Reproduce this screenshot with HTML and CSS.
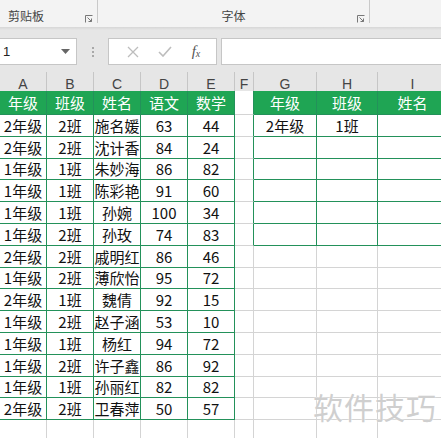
FILE: index.html
```html
<!DOCTYPE html>
<html lang="zh">
<head>
<meta charset="utf-8">
<link rel="stylesheet" href="styles.css">
</head>
<body>
<div class="page">
  <div class="ribbon">
    <div class="group g1"><span class="glabel">剪贴板</span><svg class="launch" width="8" height="8" viewBox="0 0 8 8"><path d="M0.5 7.5V0.5H7.5" fill="none" stroke="#777" stroke-width="1"/><path d="M2.5 2.5L6.5 6.5M3.5 6.5H6.5V3.5" fill="none" stroke="#777" stroke-width="1"/></svg></div>
    <div class="group g2"><span class="glabel center">字体</span><svg class="launch" width="8" height="8" viewBox="0 0 8 8"><path d="M0.5 7.5V0.5H7.5" fill="none" stroke="#777" stroke-width="1"/><path d="M2.5 2.5L6.5 6.5M3.5 6.5H6.5V3.5" fill="none" stroke="#777" stroke-width="1"/></svg></div>
  </div>
  <div class="shadow"></div>
  <div class="fbar">
    <div class="namebox"><span class="nbtext">1</span><svg class="drop" width="9" height="5" viewBox="0 0 9 5"><path d="M0 0H9L4.5 5Z" fill="#666"/></svg></div>
    <div class="dots"><i></i><i></i><i></i></div>
    <div class="fxbox">
      <svg class="ico" width="12" height="12" viewBox="0 0 12 12"><path d="M1 1L11 11M11 1L1 11" stroke="#bdbdbd" stroke-width="1.3" fill="none"/></svg>
      <svg class="ico" width="14" height="11" viewBox="0 0 14 11"><path d="M1 6L5 10L13 1" stroke="#bdbdbd" stroke-width="1.6" fill="none"/></svg>
      <span class="fx">f<sub>x</sub></span>
    </div>
    <div class="finput"></div>
  </div>
  <div class="sheet">
    <div class="ch">A</div><div class="ch">B</div><div class="ch">C</div><div class="ch">D</div><div class="ch">E</div><div class="ch">F</div><div class="ch">G</div><div class="ch">H</div><div class="ch">I</div>

    <div class="c h">年级</div><div class="c h">班级</div><div class="c h">姓名</div><div class="c h">语文</div><div class="c h">数学</div><div class="c f fg"></div><div class="c h">年级</div><div class="c h">班级</div><div class="c h">姓名</div>

    <div class="c g">2年级</div><div class="c g">2班</div><div class="c g">施名媛</div><div class="c g">63</div><div class="c g">44</div><div class="c f fg"></div><div class="c g">2年级</div><div class="c g">1班</div><div class="c g"></div>
    <div class="c g">2年级</div><div class="c g">2班</div><div class="c g">沈计香</div><div class="c g">84</div><div class="c g">24</div><div class="c f fg"></div><div class="c g"></div><div class="c g"></div><div class="c g"></div>
    <div class="c g">1年级</div><div class="c g">1班</div><div class="c g">朱妙海</div><div class="c g">86</div><div class="c g">82</div><div class="c f fg"></div><div class="c g"></div><div class="c g"></div><div class="c g"></div>
    <div class="c g">1年级</div><div class="c g">1班</div><div class="c g">陈彩艳</div><div class="c g">91</div><div class="c g">60</div><div class="c f fg"></div><div class="c g"></div><div class="c g"></div><div class="c g"></div>
    <div class="c g">1年级</div><div class="c g">1班</div><div class="c g">孙婉</div><div class="c g">100</div><div class="c g">34</div><div class="c f fg"></div><div class="c g"></div><div class="c g"></div><div class="c g"></div>
    <div class="c g">1年级</div><div class="c g">2班</div><div class="c g">孙玫</div><div class="c g">74</div><div class="c g">83</div><div class="c f fg"></div><div class="c g"></div><div class="c g"></div><div class="c g"></div>
    <div class="c g">2年级</div><div class="c g">2班</div><div class="c g">戚明红</div><div class="c g">86</div><div class="c g">46</div><div class="c f"></div><div class="c"></div><div class="c"></div><div class="c"></div>
    <div class="c g">1年级</div><div class="c g">2班</div><div class="c g">薄欣怡</div><div class="c g">95</div><div class="c g">72</div><div class="c f"></div><div class="c"></div><div class="c"></div><div class="c"></div>
    <div class="c g">2年级</div><div class="c g">1班</div><div class="c g">魏倩</div><div class="c g">92</div><div class="c g">15</div><div class="c f"></div><div class="c"></div><div class="c"></div><div class="c"></div>
    <div class="c g">1年级</div><div class="c g">2班</div><div class="c g">赵子涵</div><div class="c g">53</div><div class="c g">10</div><div class="c f"></div><div class="c"></div><div class="c"></div><div class="c"></div>
    <div class="c g">1年级</div><div class="c g">1班</div><div class="c g">杨红</div><div class="c g">94</div><div class="c g">72</div><div class="c f"></div><div class="c"></div><div class="c"></div><div class="c"></div>
    <div class="c g">1年级</div><div class="c g">2班</div><div class="c g">许子鑫</div><div class="c g">86</div><div class="c g">92</div><div class="c f"></div><div class="c"></div><div class="c"></div><div class="c"></div>
    <div class="c g">1年级</div><div class="c g">1班</div><div class="c g">孙丽红</div><div class="c g">82</div><div class="c g">82</div><div class="c f"></div><div class="c"></div><div class="c"></div><div class="c"></div>
    <div class="c g">2年级</div><div class="c g">2班</div><div class="c g">卫春萍</div><div class="c g">50</div><div class="c g">57</div><div class="c f"></div><div class="c"></div><div class="c"></div><div class="c"></div>
    <div class="c"></div><div class="c"></div><div class="c"></div><div class="c"></div><div class="c"></div><div class="c f"></div><div class="c"></div><div class="c"></div><div class="c"></div>
  </div>
  <div class="watermark">软件技巧</div>
</div>
</body>
</html>
```

FILE: styles.css
```css
* { box-sizing: border-box; }
html, body { margin: 0; padding: 0; background: #ffffff; }
.page {
  position: relative;
  width: 441px;
  height: 438px;
  overflow: hidden;
  font-family: "Noto Sans CJK SC", "Noto Sans", sans-serif;
}
.ribbon {
  display: flex;
  height: 27px;
  background: #f3f3f3;
  padding-bottom: 4px;
}
.group {
  position: relative;
  display: flex;
  align-items: flex-end;
  height: 23px;
  border-right: 1px solid #c9c9c9;
}
.g1 { width: 98px; }
.g2 { width: 272px; }
.glabel {
  font-size: 12px;
  color: #444;
  line-height: 14px;
  padding-left: 8px;
  padding-bottom: 0;
}
.glabel.center { flex: 1; text-align: center; padding-left: 0; }
.launch { position: absolute; right: 4px; bottom: 0; }
.shadow {
  height: 3px;
  background: linear-gradient(#d6d6d6, #e6e6e6);
}
.fbar {
  display: flex;
  align-items: flex-start;
  height: 42px;
  background: #e6e6e6;
  padding-top: 8px;
}
.namebox {
  display: flex;
  align-items: center;
  justify-content: space-between;
  width: 78px;
  height: 27px;
  margin-left: -1px;
  background: #fff;
  border: 1px solid #c6c6c6;
  padding: 0 6px 0 3px;
}
.nbtext { font-size: 13px; color: #222; font-family: "Liberation Sans", sans-serif; }
.dots {
  display: flex;
  flex-direction: column;
  align-items: center;
  justify-content: center;
  gap: 2px;
  width: 31px;
  height: 27px;
}
.dots i {
  display: block;
  width: 2px;
  height: 2px;
  background: #a8a8a8;
}
.fxbox {
  display: flex;
  align-items: center;
  justify-content: space-around;
  width: 109px;
  height: 27px;
  background: #fff;
  border: 1px solid #c6c6c6;
  padding: 0 6px 0 8px;
}
.fx {
  font-family: "Liberation Serif", serif;
  font-style: italic;
  font-size: 15px;
  color: #555;
  line-height: 1;
}
.fx sub { font-size: 10px; vertical-align: -1px; }
.finput {
  flex: 1;
  height: 27px;
  margin-left: 4px;
  margin-right: -1px;
  background: #fff;
  border: 1px solid #c6c6c6;
}
.sheet {
  display: grid;
  grid-template-columns: 47px 47px 47px 47px 47px 19px 63px 61px 70px;
  grid-template-rows: 19px 24px repeat(15, 21.8px);
}
.ch {
  display: flex;
  align-items: flex-start;
  justify-content: center;
  padding-top: 5px;
  background: #e6e6e6;
  border-right: 1px solid #c6c6c6;
  color: #444;
  font-family: "Liberation Sans", sans-serif;
  font-size: 14px;
  line-height: 14px;
}
.c {
  display: flex;
  align-items: center;
  justify-content: center;
  border-right: 1px solid #d4d4d4;
  border-bottom: 1px solid #d4d4d4;
  font-size: 15px;
  color: #111;
  white-space: nowrap;
  line-height: 1;
}
.g {
  border-right-color: #23915a;
  border-bottom-color: #23915a;
}
.h {
  background: #1fa554;
  color: #fff;
  border-right-color: #23915a;
  border-bottom-color: #23915a;
}
.fg { border-right-color: #23915a; }
.watermark {
  position: absolute;
  left: 313px;
  top: 386px;
  font-size: 30px;
  color: #cfcfcf;
  letter-spacing: 1px;
  line-height: 40px;
  text-shadow: 0 0 2px #fff;
}
```
